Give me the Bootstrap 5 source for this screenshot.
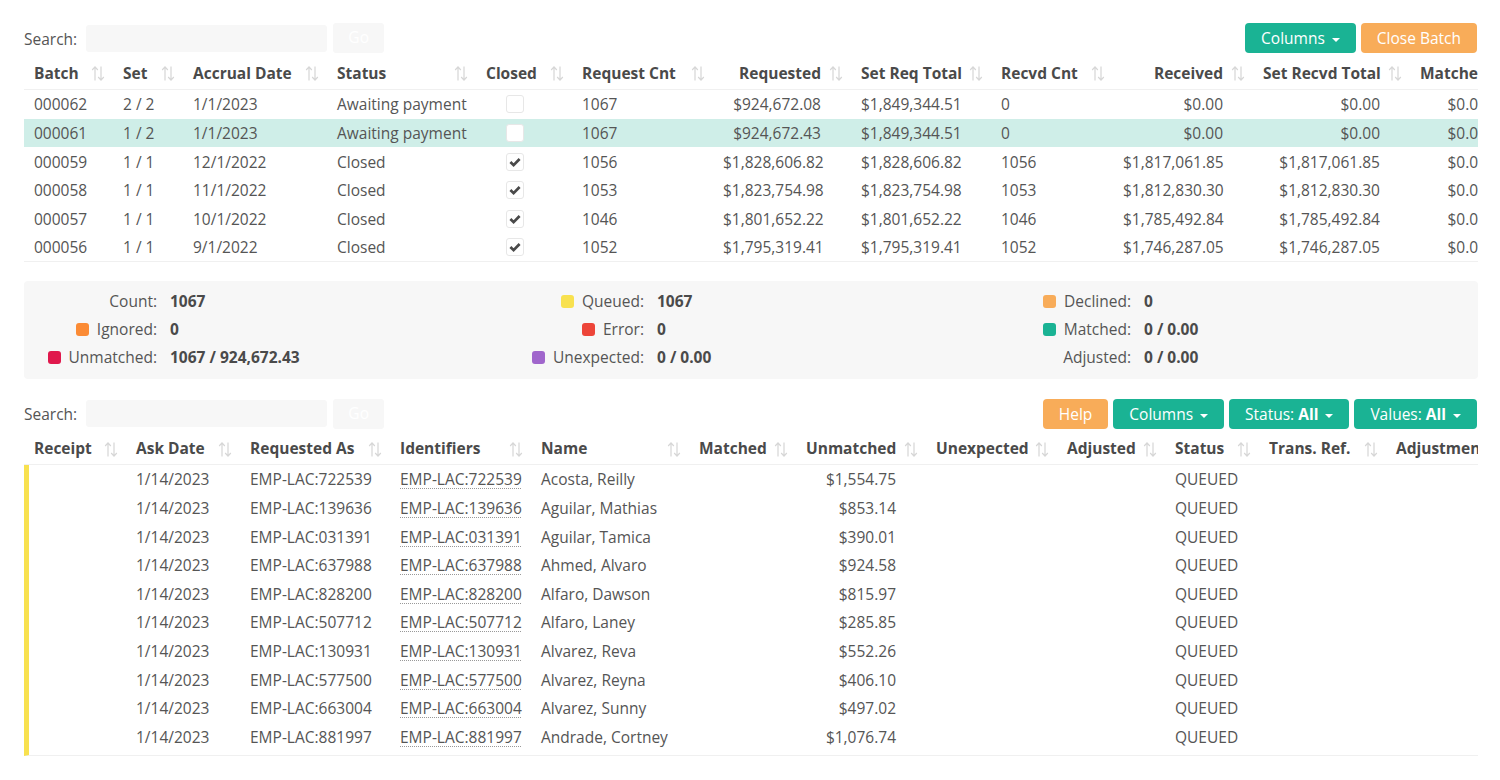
<!DOCTYPE html>
<html lang="en">
<head>
<meta charset="utf-8">
<title>Batches</title>
<link href="https://cdn.jsdelivr.net/npm/bootstrap@5.3.0/dist/css/bootstrap.min.css" rel="stylesheet">
<style>
html,body{background:#fff;}
body{font-family:"Open Sans","Noto Sans",sans-serif;font-size:15.5px;color:#555;line-height:20px;overflow:hidden;}
.page-wrap{padding:23px 22px 0 24px;}
.tool-row{height:30px;margin-right:1px;}
.search-lbl{margin-right:9px;padding-top:1px;}
.search-box{width:241px;height:27px;background:#f7f7f7;border:0;border-radius:3px;padding:0 8px;}
.go-btn{width:51px;height:30px;margin-left:6px;background:#f7f7f7;border:0;border-radius:3px;color:#fff;font-size:15.5px;padding:0;opacity:1;}
.act-btn{height:30px;border:0;border-radius:4px;color:#fff;font-size:15.5px;line-height:20px;padding:0 16px;}
.act-btn:hover,.act-btn:focus{color:#fff;}
.act-teal,.act-teal:hover{background:#1ab394;}
.act-orange,.act-orange:hover{background:#f8ac59;}
.act-btn.dropdown-toggle::after{vertical-align:2px;margin-left:7px;border-top-width:.3em;border-left-width:.3em;border-right-width:.3em;}
.table-clip{overflow:hidden;width:1454px;}
.data-grid{table-layout:fixed;margin:0;border-collapse:separate;border-spacing:0;color:#555;}
.data-grid th,.data-grid td{border:0;padding:0 10px;white-space:nowrap;background:transparent;color:#555;box-shadow:none;}
.data-grid th{position:relative;height:37px;padding-top:3px;font-weight:700;color:#4a4a4a;border-bottom:1px solid #f0f0f0;vertical-align:middle;}
.data-grid td{vertical-align:middle;overflow:hidden;}
.grid-a td{height:28.67px;}
.grid-a tr:last-child td{border-bottom:1px solid #f0f0f0;}
.grid-b th{height:36px;}
.grid-b td{height:28.65px;}
.grid-b tr:last-child td{border-bottom:1px solid #f0f0f0;height:33.5px;padding-bottom:4.5px;}
.grid-a{width:1493px;}
.grid-b{width:1600px;}
.grid-a col:nth-child(1){width:89px}.grid-a col:nth-child(2){width:70px}.grid-a col:nth-child(3){width:144px}.grid-a col:nth-child(4){width:149px}.grid-a col:nth-child(5){width:96px}.grid-a col:nth-child(6){width:141px}.grid-a col:nth-child(7){width:138px}.grid-a col:nth-child(8){width:140px}.grid-a col:nth-child(9){width:122px}.grid-a col:nth-child(10){width:140px}.grid-a col:nth-child(11){width:157px}.grid-a col:nth-child(12){width:107px}
.grid-b col:nth-child(1){width:102px}.grid-b col:nth-child(2){width:114px}.grid-b col:nth-child(3){width:150px}.grid-b col:nth-child(4){width:141px}.grid-b col:nth-child(5){width:158px}.grid-b col:nth-child(6){width:107px}.grid-b col:nth-child(7){width:130px}.grid-b col:nth-child(8){width:131px}.grid-b col:nth-child(9){width:108px}.grid-b col:nth-child(10){width:94px}.grid-b col:nth-child(11){width:127px}.grid-b col:nth-child(12){width:238px}
.data-grid th.num,.data-grid td.num{text-align:right;padding-right:30px;}
.data-grid tr.row-sel td{background:#cfeee8;}
.data-grid td.strip{border-left:5px solid #f8e14f;padding-left:5px;}
.sort-ico{position:absolute;right:7px;top:12px;width:16px;height:17px;color:#d6d6d6;}
.chk{display:block;width:18px;height:18px;margin:0 auto 0 20px;background:#fff;border:1px solid #e7e7e7;border-radius:3px;line-height:0;}
.chk svg{width:16px;height:16px;}
.id-link{color:#555;text-decoration:underline dotted #999 1px;text-underline-offset:3px;}
.stats-panel{background:#f7f7f7;border-radius:4px;height:98px;margin-top:19px;padding:6px 0;}
.stat-col{width:487px;flex:none;}
.stat-row{height:28px;}
.stat-lbl{width:133px;text-align:right;flex:none;}
.stat-val{margin-left:13px;font-weight:700;color:#4a4a4a;}
.swatch{display:inline-block;width:13px;height:13px;border-radius:3px;margin-right:8px;vertical-align:-1px;}
.sw-yellow{background:#f8e14f;}.sw-amber{background:#f8ac59;}.sw-orange{background:#fb8b35;}.sw-red{background:#ed4539;}.sw-teal{background:#1ab394;}.sw-crimson{background:#e0184c;}.sw-purple{background:#a066cc;}
.second-bar{margin-top:20px;}
.gap-5px{gap:5px;}
</style>
</head>
<body>
<svg width="0" height="0" class="position-absolute"><symbol id="s" viewBox="0 0 16 17"><path d="M5 15.5V2M2.2 5 5 1.8 7.8 5M11 1.5V15M8.2 12 11 15.2 13.8 12" fill="none" stroke="currentColor" stroke-width="1.2"/></symbol>
<symbol id="k" viewBox="0 0 16 16"><path d="M3.4 8 6.6 11.2 12.6 5" fill="none" stroke="#4a4a4a" stroke-width="2.7"/></symbol></svg>
<div class="page-wrap">
  <div class="d-flex align-items-center justify-content-between tool-row">
    <div class="d-flex align-items-center"><span class="search-lbl">Search:</span><input class="search-box" type="text" aria-label="Search"><button class="btn go-btn" type="button">Go</button></div>
    <div class="d-flex gap-5px"><button class="btn act-btn act-teal dropdown-toggle" type="button">Columns</button><button class="btn act-btn act-orange" type="button">Close Batch</button></div>
  </div>
  <div class="table-clip">
  <table class="table data-grid grid-a">
    <colgroup><col><col><col><col><col><col><col><col><col><col><col><col></colgroup>
    <thead><tr>
      <th>Batch<svg class="sort-ico"><use href="#s"/></svg></th>
      <th>Set<svg class="sort-ico"><use href="#s"/></svg></th>
      <th>Accrual Date<svg class="sort-ico"><use href="#s"/></svg></th>
      <th>Status<svg class="sort-ico"><use href="#s"/></svg></th>
      <th>Closed<svg class="sort-ico"><use href="#s"/></svg></th>
      <th>Request Cnt<svg class="sort-ico"><use href="#s"/></svg></th>
      <th class="num">Requested<svg class="sort-ico"><use href="#s"/></svg></th>
      <th class="num">Set Req Total<svg class="sort-ico"><use href="#s"/></svg></th>
      <th>Recvd Cnt<svg class="sort-ico"><use href="#s"/></svg></th>
      <th class="num">Received<svg class="sort-ico"><use href="#s"/></svg></th>
      <th class="num">Set Recvd Total<svg class="sort-ico"><use href="#s"/></svg></th>
      <th>Matched</th>
    </tr></thead>
    <tbody>
      <tr><td>000062</td><td>2 / 2</td><td>1/1/2023</td><td>Awaiting payment</td><td><span class="chk"></span></td><td>1067</td><td class="num">$924,672.08</td><td class="num">$1,849,344.51</td><td>0</td><td class="num">$0.00</td><td class="num">$0.00</td><td class="num">$0.00</td></tr>
      <tr class="row-sel"><td>000061</td><td>1 / 2</td><td>1/1/2023</td><td>Awaiting payment</td><td><span class="chk"></span></td><td>1067</td><td class="num">$924,672.43</td><td class="num">$1,849,344.51</td><td>0</td><td class="num">$0.00</td><td class="num">$0.00</td><td class="num">$0.00</td></tr>
      <tr><td>000059</td><td>1 / 1</td><td>12/1/2022</td><td>Closed</td><td><span class="chk"><svg><use href="#k"/></svg></span></td><td>1056</td><td class="num">$1,828,606.82</td><td class="num">$1,828,606.82</td><td>1056</td><td class="num">$1,817,061.85</td><td class="num">$1,817,061.85</td><td class="num">$0.00</td></tr>
      <tr><td>000058</td><td>1 / 1</td><td>11/1/2022</td><td>Closed</td><td><span class="chk"><svg><use href="#k"/></svg></span></td><td>1053</td><td class="num">$1,823,754.98</td><td class="num">$1,823,754.98</td><td>1053</td><td class="num">$1,812,830.30</td><td class="num">$1,812,830.30</td><td class="num">$0.00</td></tr>
      <tr><td>000057</td><td>1 / 1</td><td>10/1/2022</td><td>Closed</td><td><span class="chk"><svg><use href="#k"/></svg></span></td><td>1046</td><td class="num">$1,801,652.22</td><td class="num">$1,801,652.22</td><td>1046</td><td class="num">$1,785,492.84</td><td class="num">$1,785,492.84</td><td class="num">$0.00</td></tr>
      <tr><td>000056</td><td>1 / 1</td><td>9/1/2022</td><td>Closed</td><td><span class="chk"><svg><use href="#k"/></svg></span></td><td>1052</td><td class="num">$1,795,319.41</td><td class="num">$1,795,319.41</td><td>1052</td><td class="num">$1,746,287.05</td><td class="num">$1,746,287.05</td><td class="num">$0.00</td></tr>
    </tbody>
  </table>
  </div>

  <div class="stats-panel d-flex">
    <div class="stat-col">
      <div class="d-flex stat-row align-items-center"><span class="stat-lbl">Count:</span><span class="stat-val">1067</span></div>
      <div class="d-flex stat-row align-items-center"><span class="stat-lbl"><i class="swatch sw-orange"></i>Ignored:</span><span class="stat-val">0</span></div>
      <div class="d-flex stat-row align-items-center"><span class="stat-lbl"><i class="swatch sw-crimson"></i>Unmatched:</span><span class="stat-val">1067 / 924,672.43</span></div>
    </div>
    <div class="stat-col">
      <div class="d-flex stat-row align-items-center"><span class="stat-lbl"><i class="swatch sw-yellow"></i>Queued:</span><span class="stat-val">1067</span></div>
      <div class="d-flex stat-row align-items-center"><span class="stat-lbl"><i class="swatch sw-red"></i>Error:</span><span class="stat-val">0</span></div>
      <div class="d-flex stat-row align-items-center"><span class="stat-lbl"><i class="swatch sw-purple"></i>Unexpected:</span><span class="stat-val">0 / 0.00</span></div>
    </div>
    <div class="stat-col">
      <div class="d-flex stat-row align-items-center"><span class="stat-lbl"><i class="swatch sw-amber"></i>Declined:</span><span class="stat-val">0</span></div>
      <div class="d-flex stat-row align-items-center"><span class="stat-lbl"><i class="swatch sw-teal"></i>Matched:</span><span class="stat-val">0 / 0.00</span></div>
      <div class="d-flex stat-row align-items-center"><span class="stat-lbl">Adjusted:</span><span class="stat-val">0 / 0.00</span></div>
    </div>
  </div>

  <div class="d-flex align-items-center justify-content-between tool-row second-bar">
    <div class="d-flex align-items-center"><span class="search-lbl">Search:</span><input class="search-box" type="text" aria-label="Search"><button class="btn go-btn" type="button">Go</button></div>
    <div class="d-flex gap-5px"><button class="btn act-btn act-orange" type="button">Help</button><button class="btn act-btn act-teal dropdown-toggle" type="button">Columns</button><button class="btn act-btn act-teal dropdown-toggle" type="button">Status: <b>All</b></button><button class="btn act-btn act-teal dropdown-toggle" type="button">Values: <b>All</b></button></div>
  </div>
  <div class="table-clip">
  <table class="table data-grid grid-b">
    <colgroup><col><col><col><col><col><col><col><col><col><col><col><col></colgroup>
    <thead><tr>
      <th>Receipt<svg class="sort-ico"><use href="#s"/></svg></th>
      <th>Ask Date<svg class="sort-ico"><use href="#s"/></svg></th>
      <th>Requested As<svg class="sort-ico"><use href="#s"/></svg></th>
      <th>Identifiers<svg class="sort-ico"><use href="#s"/></svg></th>
      <th>Name<svg class="sort-ico"><use href="#s"/></svg></th>
      <th class="num">Matched<svg class="sort-ico"><use href="#s"/></svg></th>
      <th class="num">Unmatched<svg class="sort-ico"><use href="#s"/></svg></th>
      <th class="num">Unexpected<svg class="sort-ico"><use href="#s"/></svg></th>
      <th class="num">Adjusted<svg class="sort-ico"><use href="#s"/></svg></th>
      <th>Status<svg class="sort-ico"><use href="#s"/></svg></th>
      <th>Trans. Ref.<svg class="sort-ico"><use href="#s"/></svg></th>
      <th>Adjustment</th>
    </tr></thead>
    <tbody>
      <tr><td class="strip"></td><td>1/14/2023</td><td>EMP-LAC:722539</td><td><a class="id-link" href="#">EMP-LAC:722539</a></td><td>Acosta, Reilly</td><td class="num"></td><td class="num">$1,554.75</td><td></td><td></td><td>QUEUED</td><td></td><td></td></tr>
      <tr><td class="strip"></td><td>1/14/2023</td><td>EMP-LAC:139636</td><td><a class="id-link" href="#">EMP-LAC:139636</a></td><td>Aguilar, Mathias</td><td class="num"></td><td class="num">$853.14</td><td></td><td></td><td>QUEUED</td><td></td><td></td></tr>
      <tr><td class="strip"></td><td>1/14/2023</td><td>EMP-LAC:031391</td><td><a class="id-link" href="#">EMP-LAC:031391</a></td><td>Aguilar, Tamica</td><td class="num"></td><td class="num">$390.01</td><td></td><td></td><td>QUEUED</td><td></td><td></td></tr>
      <tr><td class="strip"></td><td>1/14/2023</td><td>EMP-LAC:637988</td><td><a class="id-link" href="#">EMP-LAC:637988</a></td><td>Ahmed, Alvaro</td><td class="num"></td><td class="num">$924.58</td><td></td><td></td><td>QUEUED</td><td></td><td></td></tr>
      <tr><td class="strip"></td><td>1/14/2023</td><td>EMP-LAC:828200</td><td><a class="id-link" href="#">EMP-LAC:828200</a></td><td>Alfaro, Dawson</td><td class="num"></td><td class="num">$815.97</td><td></td><td></td><td>QUEUED</td><td></td><td></td></tr>
      <tr><td class="strip"></td><td>1/14/2023</td><td>EMP-LAC:507712</td><td><a class="id-link" href="#">EMP-LAC:507712</a></td><td>Alfaro, Laney</td><td class="num"></td><td class="num">$285.85</td><td></td><td></td><td>QUEUED</td><td></td><td></td></tr>
      <tr><td class="strip"></td><td>1/14/2023</td><td>EMP-LAC:130931</td><td><a class="id-link" href="#">EMP-LAC:130931</a></td><td>Alvarez, Reva</td><td class="num"></td><td class="num">$552.26</td><td></td><td></td><td>QUEUED</td><td></td><td></td></tr>
      <tr><td class="strip"></td><td>1/14/2023</td><td>EMP-LAC:577500</td><td><a class="id-link" href="#">EMP-LAC:577500</a></td><td>Alvarez, Reyna</td><td class="num"></td><td class="num">$406.10</td><td></td><td></td><td>QUEUED</td><td></td><td></td></tr>
      <tr><td class="strip"></td><td>1/14/2023</td><td>EMP-LAC:663004</td><td><a class="id-link" href="#">EMP-LAC:663004</a></td><td>Alvarez, Sunny</td><td class="num"></td><td class="num">$497.02</td><td></td><td></td><td>QUEUED</td><td></td><td></td></tr>
      <tr><td class="strip"></td><td>1/14/2023</td><td>EMP-LAC:881997</td><td><a class="id-link" href="#">EMP-LAC:881997</a></td><td>Andrade, Cortney</td><td class="num"></td><td class="num">$1,076.74</td><td></td><td></td><td>QUEUED</td><td></td><td></td></tr>
    </tbody>
  </table>
  </div>
</div>
<script src="https://cdn.jsdelivr.net/npm/bootstrap@5.3.0/dist/js/bootstrap.bundle.min.js"></script>
</body>
</html>
